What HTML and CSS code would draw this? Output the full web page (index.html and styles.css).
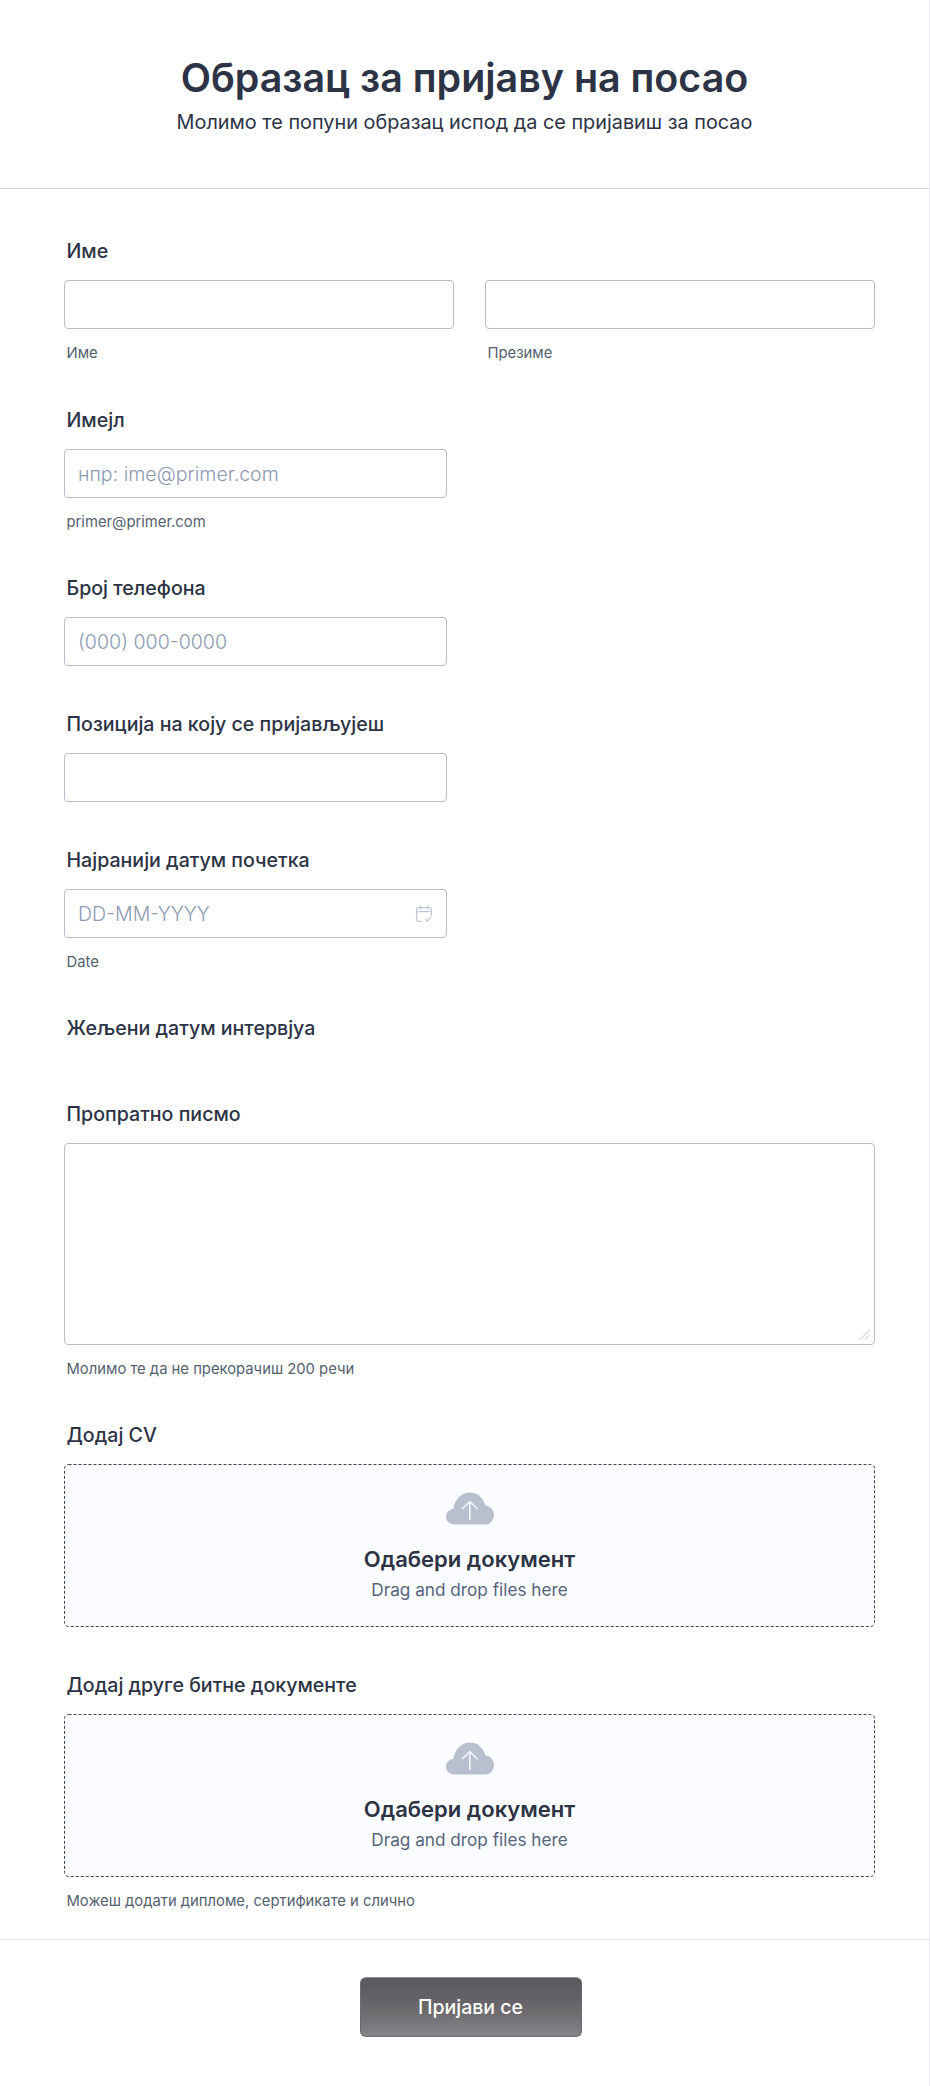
FILE: index.html
```html
<!DOCTYPE html>
<html lang="sr">
<head>
    <meta charset="UTF-8">
    <meta name="viewport" content="width=device-width, initial-scale=1.0">
    <title>Образац за пријаву на посао</title>
    <link rel="stylesheet" href="styles.css">
</head>
<body>
    <form class="form-card">
        <header class="form-header">
            <h1>Образац за пријаву на посао</h1>
            <p>Молимо те попуни образац испод да се пријавиш за посао</p>
        </header>

        <div class="form-fields">
            <div class="field">
                <label class="field-label">Име</label>
                <div class="field-row">
                    <div class="field-col">
                        <div class="input"></div>
                        <span class="sublabel">Име</span>
                    </div>
                    <div class="field-col">
                        <div class="input"></div>
                        <span class="sublabel">Презиме</span>
                    </div>
                </div>
            </div>

            <div class="field field-tight">
                <label class="field-label">Имејл</label>
                <div class="input input-short placeholder">нпр: ime@primer.com</div>
                <span class="sublabel">primer@primer.com</span>
            </div>

            <div class="field field-loose">
                <label class="field-label">Број телефона</label>
                <div class="input input-short placeholder">(000) 000-0000</div>
            </div>

            <div class="field field-loose">
                <label class="field-label">Позиција на коју се пријављујеш</label>
                <div class="input input-short"></div>
            </div>

            <div class="field field-tight">
                <label class="field-label">Најранији датум почетка</label>
                <div class="input input-short placeholder input-date">
                    DD-MM-YYYY
                    <svg class="date-icon" width="18" height="18" viewBox="0 0 18 18" fill="none" stroke="#c2c7d6" stroke-width="1.3" stroke-linecap="round" stroke-linejoin="round">
                        <path d="M7 16.4H3.4a1.8 1.8 0 0 1-1.8-1.8V4.4a1.8 1.8 0 0 1 1.8-1.8h11.2a1.8 1.8 0 0 1 1.8 1.8v6.2"/>
                        <path d="M1.6 6.6h14.8M5.4 1v3M12.6 1v3"/>
                        <path d="M10.6 14.2l1.8 1.8 3.4-3.6"/>
                    </svg>
                </div>
                <span class="sublabel">Date</span>
            </div>

            <div class="field field-empty">
                <label class="field-label">Жељени датум интервјуа</label>
            </div>

            <div class="field field-tight">
                <label class="field-label">Пропратно писмо</label>
                <div class="input textarea">
                    <svg class="resize-grip" width="12" height="12" viewBox="0 0 12 12" fill="none" stroke="#b9bfd0" stroke-width="1">
                        <path d="M1 10.5L10.5 1M6 10.5L10.5 6"/>
                    </svg>
                </div>
                <span class="sublabel">Молимо те да не прекорачиш 200 речи</span>
            </div>

            <div class="field field-loose">
                <label class="field-label">Додај CV</label>
                <div class="upload">
                    <svg class="upload-border"><rect x="0.5" y="0.5" rx="4" ry="4"/></svg>
                    <svg class="cloud" width="48" height="33" viewBox="0 0 48 33">
                        <path fill="#b8c0d0" d="M8 32.500C3.500 32.500 0 29 0 24.800c0-4.100 3-7.500 7.500-8C8.500 7.200 15.500.5 24 .5c7 0 13 4.500 15.500 13 5 .5 8.500 4.500 8.500 9.500 0 5.200-4 9.500-8.500 9.500z"/>
                        <path fill="none" stroke="#f4f6fb" stroke-width="1.600" d="M23.800 28V9.500M16 17.200l7.800-7.700 7.800 7.700"/>
                    </svg>
                    <strong>Одабери документ</strong>
                    <span>Drag and drop files here</span>
                </div>
            </div>

            <div class="field field-last">
                <label class="field-label">Додај друге битне документе</label>
                <div class="upload">
                    <svg class="upload-border"><rect x="0.5" y="0.5" rx="4" ry="4"/></svg>
                    <svg class="cloud" width="48" height="33" viewBox="0 0 48 33">
                        <path fill="#b8c0d0" d="M8 32.500C3.500 32.500 0 29 0 24.800c0-4.100 3-7.500 7.500-8C8.500 7.200 15.500.5 24 .5c7 0 13 4.500 15.500 13 5 .5 8.500 4.500 8.500 9.500 0 5.200-4 9.500-8.500 9.500z"/>
                        <path fill="none" stroke="#f4f6fb" stroke-width="1.600" d="M23.800 28V9.500M16 17.200l7.800-7.700 7.800 7.700"/>
                    </svg>
                    <strong>Одабери документ</strong>
                    <span>Drag and drop files here</span>
                </div>
                <span class="sublabel">Можеш додати дипломе, сертификате и слично</span>
            </div>
        </div>

        <footer class="form-footer">
            <button type="button" class="submit-btn">Пријави се</button>
        </footer>
    </form>
</body>
</html>
```

FILE: styles.css
```css
* {
    box-sizing: border-box;
}

body {
    margin: 0;
    padding: 0;
    background-color: #fff;
    font-family: Inter, "Noto Sans", sans-serif;
    color: #2c3345;
}

.form-card {
    width: 930px;
    height: 2086px;
    border-right: 1px solid #e3e5f0;
}

.form-header {
    height: 189px;
    padding-top: 54px;
    border-bottom: 1px solid #d8dae9;
    text-align: center;
}

.form-header h1 {
    margin: 0;
    font-size: 39.4px;
    line-height: 48px;
    font-weight: 600;
}

.form-header p {
    margin: 8px 0 0;
    font-size: 19.85px;
    line-height: 24px;
}

.form-fields {
    display: flex;
    flex-direction: column;
    padding: 50px 54px 0 64px;
}

.field {
    display: flex;
    flex-direction: column;
    align-items: flex-start;
    margin-bottom: 45px;
}

.field-tight {
    margin-bottom: 44px;
}

.field-loose {
    margin-bottom: 46px;
}

.field-empty {
    margin-bottom: 62px;
}

.field-last {
    margin-bottom: 28px;
}

.field-label {
    margin-left: 2.5px;
    margin-bottom: 17px;
    font-size: 19.6px;
    line-height: 24px;
    font-weight: 450;
}

.field-empty .field-label {
    margin-bottom: 0;
}

.field-row {
    display: flex;
    gap: 31px;
    width: 100%;
}

.field-col {
    flex: 1;
}

.input {
    display: flex;
    align-items: center;
    width: 100%;
    height: 49px;
    padding: 0 13px;
    background-color: #fff;
    border: 1px solid #b8bccb;
    border-radius: 4px;
}

.input-short {
    width: 383px;
}

.placeholder {
    font-size: 19.6px;
    font-weight: 300;
    color: #8d9ab3;
}

.input-date {
    justify-content: space-between;
}

.date-icon {
    flex-shrink: 0;
}

.textarea {
    position: relative;
    height: 202px;
}

.resize-grip {
    position: absolute;
    right: 3px;
    bottom: 3px;
}

.sublabel {
    display: block;
    margin: 14px 0 0 2.5px;
    font-size: 14.8px;
    line-height: 20px;
    color: #545f6f;
}

.upload {
    position: relative;
    display: flex;
    flex-direction: column;
    align-items: center;
    width: 100%;
    height: 163px;
    padding-top: 28px;
    background-color: #fbfcff;
    border-radius: 4px;
}

/* svg instead of border: a css dashed border has wider gaps than the design */
.upload-border {
    position: absolute;
    top: 0;
    left: 0;
    width: 100%;
    height: 100%;
}

.upload-border rect {
    width: calc(100% - 1px);
    height: calc(100% - 1px);
    fill: none;
    stroke: #3f4557;
    stroke-width: 1;
    stroke-dasharray: 3 2;
}

.upload strong {
    margin-top: 20px;
    font-size: 22px;
    line-height: 28px;
    font-weight: 600;
}

.upload span {
    margin-top: 5px;
    font-size: 17.2px;
    line-height: 24px;
    color: #57647e;
}

.form-footer {
    display: flex;
    justify-content: center;
    padding-top: 37px;
    padding-left: 12px;
    border-top: 1px solid #e3e5f0;
}

.submit-btn {
    width: 222px;
    height: 60px;
    border: 1px solid #6b6b70;
    border-top-color: #8b8b8f;
    border-radius: 6px;
    background: linear-gradient(180deg, #5b5a5f 0%, #5d5c61 15%, #6b696c 55%, #848488 100%);
    color: #fff;
    font-family: inherit;
    font-size: 19.5px;
    font-weight: 500;
}
```
